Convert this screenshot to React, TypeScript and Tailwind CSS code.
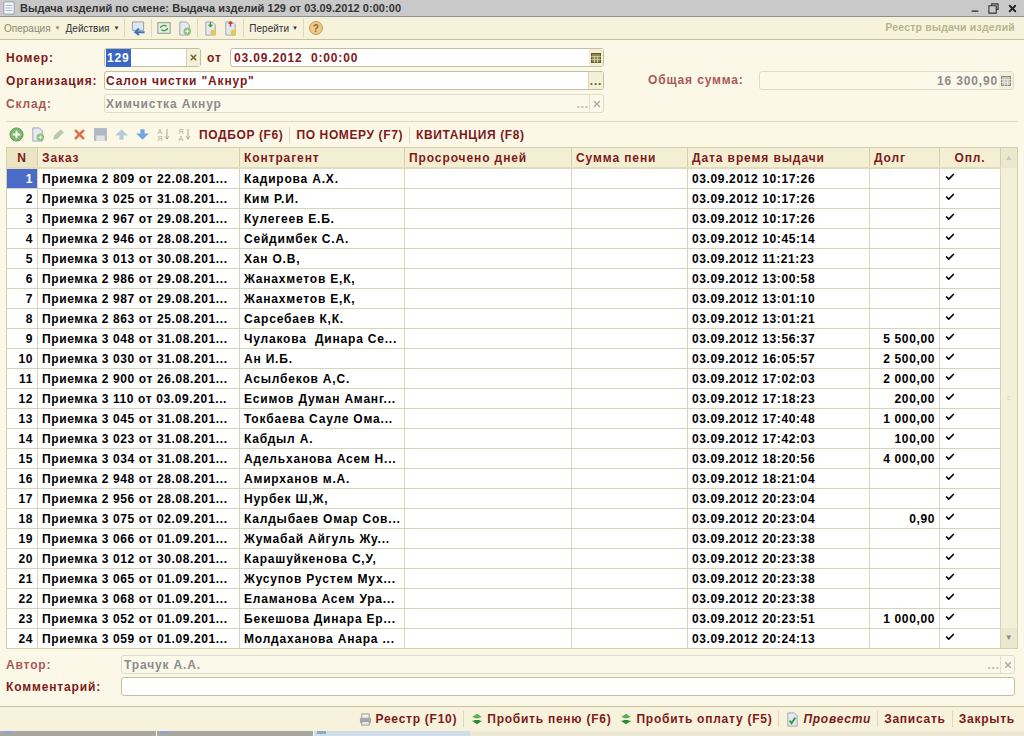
import { Check, X, Minus } from "lucide-react";

const rows = [
  ["Приемка 2 809 от 22.08.201...", "Кадирова А.Х.", "03.09.2012 10:17:26", ""],
  ["Приемка 3 025 от 31.08.201...", "Ким Р.И.", "03.09.2012 10:17:26", ""],
  ["Приемка 2 967 от 29.08.201...", "Кулегеев Е.Б.", "03.09.2012 10:17:26", ""],
  ["Приемка 2 946 от 28.08.201...", "Сейдимбек С.А.", "03.09.2012 10:45:14", ""],
  ["Приемка 3 013 от 30.08.201...", "Хан О.В,", "03.09.2012 11:21:23", ""],
  ["Приемка 2 986 от 29.08.201...", "Жанахметов Е,К,", "03.09.2012 13:00:58", ""],
  ["Приемка 2 987 от 29.08.201...", "Жанахметов Е,К,", "03.09.2012 13:01:10", ""],
  ["Приемка 2 863 от 25.08.201...", "Сарсебаев К,К.", "03.09.2012 13:01:21", ""],
  ["Приемка 3 048 от 31.08.201...", "Чулакова  Динара Се...", "03.09.2012 13:56:37", "5 500,00"],
  ["Приемка 3 030 от 31.08.201...", "Ан И.Б.", "03.09.2012 16:05:57", "2 500,00"],
  ["Приемка 2 900 от 26.08.201...", "Асылбеков А,С.", "03.09.2012 17:02:03", "2 000,00"],
  ["Приемка 3 110 от 03.09.201...", "Есимов Думан Аманг...", "03.09.2012 17:18:23", "200,00"],
  ["Приемка 3 045 от 31.08.201...", "Токбаева Сауле Ома...", "03.09.2012 17:40:48", "1 000,00"],
  ["Приемка 3 023 от 31.08.201...", "Кабдыл А.", "03.09.2012 17:42:03", "100,00"],
  ["Приемка 3 034 от 31.08.201...", "Адельханова Асем Н...", "03.09.2012 18:20:56", "4 000,00"],
  ["Приемка 2 948 от 28.08.201...", "Амирханов м.А.", "03.09.2012 18:21:04", ""],
  ["Приемка 2 956 от 28.08.201...", "Нурбек Ш,Ж,", "03.09.2012 20:23:04", ""],
  ["Приемка 3 075 от 02.09.201...", "Калдыбаев Омар Сов...", "03.09.2012 20:23:04", "0,90"],
  ["Приемка 3 066 от 01.09.201...", "Жумабай Айгуль Жу...", "03.09.2012 20:23:38", ""],
  ["Приемка 3 012 от 30.08.201...", "Карашуйкенова С,У,", "03.09.2012 20:23:38", ""],
  ["Приемка 3 065 от 01.09.201...", "Жусупов Рустем Мух...", "03.09.2012 20:23:38", ""],
  ["Приемка 3 068 от 01.09.201...", "Еламанова Асем Ура...", "03.09.2012 20:23:38", ""],
  ["Приемка 3 052 от 01.09.201...", "Бекешова Динара Ер...", "03.09.2012 20:23:51", "1 000,00"],
  ["Приемка 3 059 от 01.09.201...", "Молдаханова Анара ...", "03.09.2012 20:24:13", ""],
];

const cols = "grid grid-cols-[31px_202px_165px_167px_116px_182px_70px_61px]";
const headCell = "flex items-center border-r border-[#d6d0a8] px-1 tracking-[0.9px] text-[#7d1a1a]";
const cell = "flex items-center overflow-hidden whitespace-pre border-r border-b border-[#d8d4bc] px-1 text-black";

function Sep() {
  return <div className="mx-[5px] h-[18px] w-px bg-[#dcd8b8]" />;
}

function BarSep() {
  return <div className="mx-[6px] h-[16px] w-px bg-[#dcd8b8]" />;
}

function Page({ children }: { children?: React.ReactNode }) {
  return (
    <svg viewBox="0 0 16 16" className="h-[15px] w-[15px] shrink-0">
      <path d="M3 1h7l3 3v11H3z" fill="#e6eaf0" stroke="#9aa4b0" />
      {children}
    </svg>
  );
}

function Green() {
  return (
    <svg viewBox="0 0 16 12" className="h-3 w-[14px] shrink-0">
      <path d="M8 0l6 4H11v1H5V4H2z" fill="#58b050" />
      <path d="M8 12l6-4H11V7H5v1H2z" fill="#2f8a36" />
    </svg>
  );
}

function Calc({ fill, stroke, line }: { fill: string; stroke: string; line: string }) {
  return (
    <svg viewBox="0 0 10 10" className="h-[10px] w-[10px]">
      <rect x="0.5" y="0.5" width="9" height="9" fill={fill} stroke={stroke} />
      <path d="M0 3.5h10M0 6.5h10M3.5 3v7M6.5 3v7" stroke={line} strokeWidth="0.6" />
    </svg>
  );
}

function Sort({ top, bottom }: { top: string; bottom: string }) {
  return (
    <div className="flex w-[15px] shrink-0 items-center justify-center text-[#b0ac90]">
      <span className="text-[7px] font-normal leading-[7px] tracking-normal">
        {top}
        <br />
        {bottom}
      </span>
      <svg viewBox="0 0 6 14" className="ml-px h-[13px] w-[6px]">
        <path d="M3 1v11M1 9l2 3 2-3" fill="none" stroke="#a8a488" />
      </svg>
    </div>
  );
}

export default function App() {
  return (
    <div className="flex h-[736px] w-[1024px] flex-col overflow-hidden bg-[#fbf8e8] font-['Liberation_Sans',sans-serif] text-[12px] font-bold tracking-[0.62px]">
      {/* Заголовок окна */}
      <div className="flex h-[17px] shrink-0 items-center border-b border-[#8f8f8f] bg-[#c9c9c9] pl-[3px] pr-[6px] text-[11px] tracking-[0.05px] text-[#333]">
        <svg viewBox="0 0 14 16" className="mr-[5px] h-[14px] w-[12px]">
          <path d="M1 1h12v14H1z" fill="#f4f6fa" stroke="#8d9bb0" />
          <path d="M3 5h8M3 8h8M3 11h8" stroke="#9fb0c8" />
        </svg>
        <span>Выдача изделий по смене: Выдача изделий 129 от 03.09.2012 0:00:00</span>
        <div className="ml-auto flex items-center gap-2 text-[#222]">
          <Minus size={10} strokeWidth={3} className="mt-[5px]" />
          <svg viewBox="0 0 12 12" className="h-[11px] w-[11px]" fill="none" stroke="#333" strokeWidth="1.2">
            <path d="M4 3V1h7v6H9M1 3h8v8H1z" />
          </svg>
          <X size={11} strokeWidth={4} />
        </div>
      </div>

      {/* Панель команд */}
      <div className="flex h-[23px] shrink-0 items-center border-b border-[#c9c398] bg-[#f6f2dc] pl-[4px] pr-[9px] text-[10px] font-normal tracking-normal text-[#333]">
        <span className="text-[#8d8a70]">Операция</span>
        <span className="ml-1 mr-[5px] text-[6px] text-[#8d8a70]">▼</span>
        <span>Действия</span>
        <span className="ml-1 text-[6px]">▼</span>
        <Sep />
        <svg viewBox="0 0 16 16" className="h-[15px] w-[16px]">
          <path d="M2 1h12v9H2z" fill="#dfe6ef" stroke="#8c9bb0" />
          <path d="M15 12H5m4-4l-4 4 4 3" fill="none" stroke="#3c78b8" strokeWidth="2" />
        </svg>
        <Sep />
        <svg viewBox="0 0 16 16" className="h-[14px] w-[14px]">
          <rect x="1" y="2" width="14" height="12" fill="#e4efe0" stroke="#7a8f88" />
          <path d="M4 8a4 3 0 0 1 7-2M12 8a4 3 0 0 1-7 2" fill="none" stroke="#3e9a50" strokeWidth="1.5" />
        </svg>
        <div className="ml-[6px]">
          <Page>
            <circle cx="11" cy="11" r="4" fill="#8fc27a" />
            <path d="M11 9v4M9 11h4" stroke="#fff" />
          </Page>
        </div>
        <Sep />
        <Page>
          <path d="M8 6V1M6 4l2 2 2-2" stroke="#4a9a40" strokeWidth="1.5" fill="none" />
          <circle cx="11" cy="12" r="3" fill="#e8c850" />
        </Page>
        <div className="ml-[5px]">
          <Page>
            <path d="M8 6V1M6 3l2-2 2 2" stroke="#c84030" strokeWidth="1.5" fill="none" />
            <circle cx="11" cy="12" r="3" fill="#e8c850" />
          </Page>
        </div>
        <Sep />
        <span>Перейти</span>
        <span className="ml-[3px] text-[6px]">▼</span>
        <div className="mx-[5px] h-[18px] w-px bg-[#dcd8b8]" />
        <div className="flex h-[14px] w-[14px] items-center justify-center rounded-full border border-[#c79a50] bg-[#f0c888] text-[10px] font-bold text-[#8a6a30]">
          ?
        </div>
        <span className="ml-auto text-[10.5px] font-bold tracking-[0.2px] text-[#b8b48c]">Реестр выдачи изделий</span>
      </div>

      {/* Шапка документа */}
      <div className="flex h-[81px] shrink-0 pl-[6px] pr-[10px] pt-[8px] tracking-[0.85px] text-[#7d1a1a]">
        <div className="flex w-[598px] flex-col gap-1">
          <div className="flex items-center">
            <span className="w-[98px]">Номер:</span>
            <div className="flex h-[19px] w-[97px] items-center rounded-[3px] border border-[#c4bf9c] bg-white pl-[1px]">
              <span className="bg-[#3a66c8] px-px text-white">129</span>
              <span className="ml-auto flex h-full w-[14px] items-center justify-center border-l border-[#d8d4bc] bg-[#f3efd8] text-[#6b6428]">
                <X size={9} strokeWidth={4} />
              </span>
            </div>
            <span className="ml-[6px] w-[23px]">от</span>
            <div className="flex h-[19px] flex-1 items-center rounded-[3px] border border-[#c4bf9c] bg-white pl-[3px]">
              03.09.2012&nbsp;&nbsp;0:00:00
              <span className="ml-auto flex h-full w-[14px] items-center justify-center bg-[#f3efd8]">
                <Calc fill="#8f8a50" stroke="#5e5a30" line="#e8e4c0" />
              </span>
            </div>
          </div>
          <div className="flex items-center">
            <span className="w-[98px]">Организация:</span>
            <div className="flex h-[19px] flex-1 items-center rounded-[3px] border border-[#c4bf9c] bg-white pl-[1px]">
              Салон чистки "Акнур"
              <span className="ml-auto flex h-full w-[15px] items-center justify-center border-l border-[#d8d4bc] bg-[#f3efd8] text-[#6b6428]">
                ...
              </span>
            </div>
          </div>
          <div className="flex items-center">
            <span className="w-[98px] text-[#a85a5a]">Склад:</span>
            <div className="flex h-[19px] flex-1 items-center rounded-[3px] border border-[#dedbc8] bg-[#fbf9ea] pl-[1px] text-[#8c8c8c]">
              Химчистка Акнур
              <span className="ml-auto text-[#bdb998]">...</span>
              <span className="flex h-full w-[14px] items-center justify-center border-l border-[#e4e0c8] text-[#a8a8a0]">
                <X size={10} strokeWidth={3} />
              </span>
            </div>
          </div>
        </div>
        <div className="ml-[44px] flex flex-1 items-start pt-[23px]">
          <span className="w-[111px] text-[#a85a5a]">Общая сумма:</span>
          <div className="flex h-[19px] flex-1 items-center justify-end rounded-[3px] border border-[#dedbc8] bg-[#fbf9ea] text-[#8c8c8c]">
            16 300,90
            <span className="ml-[1px] flex h-full w-[14px] items-center justify-center bg-[#f3efd8]">
              <Calc fill="#c8c8c0" stroke="#8c8c80" line="#f0f0e8" />
            </span>
          </div>
        </div>
      </div>

      {/* Панель табличной части */}
      <div className="mx-[6px] flex h-[26px] shrink-0 items-center border-t border-[#dcd8b8] pl-[3px] text-[#7d1a1a]">
        <div className="flex items-center gap-[6px]">
          <svg viewBox="0 0 16 16" className="h-[15px] w-[15px]">
            <circle cx="8" cy="8" r="7" fill="#7fb86a" stroke="#5f9a4e" />
            <path d="M8 4v8M4 8h8" stroke="#fff" strokeWidth="2" />
          </svg>
          <Page>
            <circle cx="11" cy="11" r="4" fill="#8fc27a" />
            <path d="M11 9v4M9 11h4" stroke="#fff" />
          </Page>
          <svg viewBox="0 0 14 14" className="h-[15px] w-[15px]">
            <path d="M2 12l1-4 6-6 3 3-6 6z" fill="#b8c8a8" />
          </svg>
          <X size={15} strokeWidth={4} className="text-[#e07050]" />
          <svg viewBox="0 0 14 14" className="h-[15px] w-[15px]">
            <rect x="1" y="1" width="12" height="12" fill="#b0b8c0" />
            <rect x="3" y="8" width="8" height="5" fill="#e0e4e8" />
          </svg>
          <svg viewBox="0 0 14 14" className="h-[15px] w-[15px]">
            <path d="M7 2l6 6H9v4H5V8H1z" fill="#b8ccd8" />
          </svg>
          <svg viewBox="0 0 14 14" className="h-[15px] w-[15px]">
            <path d="M7 12L1 6h4V2h4v4h4z" fill="#74a8e0" />
          </svg>
          <Sort top="А" bottom="Я" />
          <Sort top="Я" bottom="А" />
        </div>
        <span className="ml-[7px]">ПОДБОР (F6)</span>
        <BarSep />
        <span>ПО НОМЕРУ (F7)</span>
        <BarSep />
        <span>КВИТАНЦИЯ (F8)</span>
      </div>

      {/* Таблица */}
      <div className="mx-[6px] flex h-[502px] shrink-0 overflow-hidden border border-[#d6d0a8]">
        <div className="w-[994px] shrink-0">
          <div className={cols + " h-[21px] border-b-2 border-[#e2dcb8] bg-[#f4efd4]"}>
            <div className={headCell + " justify-center bg-[#ebe5c4]"}>N</div>
            <div className={headCell}>Заказ</div>
            <div className={headCell}>Контрагент</div>
            <div className={headCell}>Просрочено дней</div>
            <div className={headCell}>Сумма пени</div>
            <div className={headCell}>Дата время выдачи</div>
            <div className={headCell}>Долг</div>
            <div className={headCell + " justify-center"}>Опл.</div>
          </div>
          {rows.map((row, i) => (
            <div key={i} className={cols + " h-[20px] bg-white"}>
              <div className={cell + " justify-end " + (i === 0 ? "bg-[#4a6cc8] text-white" : "")}>{i + 1}</div>
              <div className={cell}>{row[0]}</div>
              <div className={cell + " tracking-[0.8px]"}>{row[1]}</div>
              <div className={cell} />
              <div className={cell} />
              <div className={cell}>{row[2]}</div>
              <div className={cell + " justify-end"}>{row[3]}</div>
              <div className={cell}>
                <Check size={10} strokeWidth={4} className="-mt-[3px] ml-[1px]" />
              </div>
            </div>
          ))}
        </div>
        <div className="flex flex-1 flex-col justify-between bg-[#f3efd8]">
          <div className="flex h-[20px] items-center justify-center bg-[#ece8d0] text-[8px] text-[#c8c8c0]">▲</div>
          <div className="flex justify-center text-[6px] text-[#d8d4bc]">≡</div>
          <div className="flex h-[20px] items-center justify-center bg-[#ece8d0] text-[8px] text-[#8c8c88]">▼</div>
        </div>
      </div>

      {/* Подвал формы */}
      <div className="flex h-[58px] shrink-0 flex-col gap-[3px] border-b border-[#c9c398] pl-[6px] pr-[9px] pt-[6px] tracking-[0.85px] text-[#7d1a1a]">
        <div className="flex items-center">
          <span className="w-[115px] text-[#a85a5a]">Автор:</span>
          <div className="flex h-[19px] flex-1 items-center rounded-[3px] border border-[#dedbc8] bg-[#fbf9ea] pl-[2px] text-[#8c8c8c]">
            Трачук А.А.
            <span className="ml-auto text-[#bdb998]">...</span>
            <span className="flex h-full w-[14px] items-center justify-center border-l border-[#e4e0c8] text-[#a8a8a0]">
              <X size={10} strokeWidth={3} />
            </span>
          </div>
        </div>
        <div className="flex items-center">
          <span className="w-[115px]">Комментарий:</span>
          <div className="h-[19px] flex-1 rounded-[3px] border border-[#c4bf9c] bg-white" />
        </div>
      </div>

      {/* Нижняя панель */}
      <div className="flex h-[24px] shrink-0 items-center justify-end bg-[#f6f2dc] pr-[9px] tracking-[0.75px] text-[#7d1a1a]">
        <svg viewBox="0 0 14 14" className="mr-[3px] h-[13px] w-[13px]">
          <rect x="3" y="1" width="8" height="5" fill="#f0f0f0" stroke="#999" />
          <rect x="1" y="5" width="12" height="6" rx="1" fill="#a8a8a8" />
          <rect x="3" y="9" width="8" height="4" fill="#e8e8e8" stroke="#999" />
        </svg>
        <span>Реестр (F10)</span>
        <BarSep />
        <Green />
        <span className="ml-[3px] mr-[8px]">Пробить пеню (F6)</span>
        <Green />
        <span className="ml-[3px]">Пробить оплату (F5)</span>
        <BarSep />
        <Page>
          <path d="M5 9l2 3 4-6" stroke="#3a9a40" strokeWidth="2" fill="none" />
        </Page>
        <span className="ml-[3px] italic">Провести</span>
        <BarSep />
        <span>Записать</span>
        <BarSep />
        <span>Закрыть</span>
      </div>

      {/* Панель окон */}
      <div className="flex min-h-0 flex-1 bg-[#ece8d4]">
        <div className="w-[157px] border-r border-white bg-[#a8a8a0] pl-[3px]">
          <div className="h-[3px] w-[9px] bg-[#8fa8c8]" />
        </div>
        <div className="w-[157px] border-r border-white bg-[#a8a8a0] pl-[3px]">
          <div className="h-[3px] w-[9px] bg-[#8fa8c8]" />
        </div>
        <div className="w-[156px] bg-[#d0dce8] pl-[3px]">
          <div className="h-[3px] w-[9px] bg-[#8fa8c8]" />
        </div>
      </div>
    </div>
  );
}
